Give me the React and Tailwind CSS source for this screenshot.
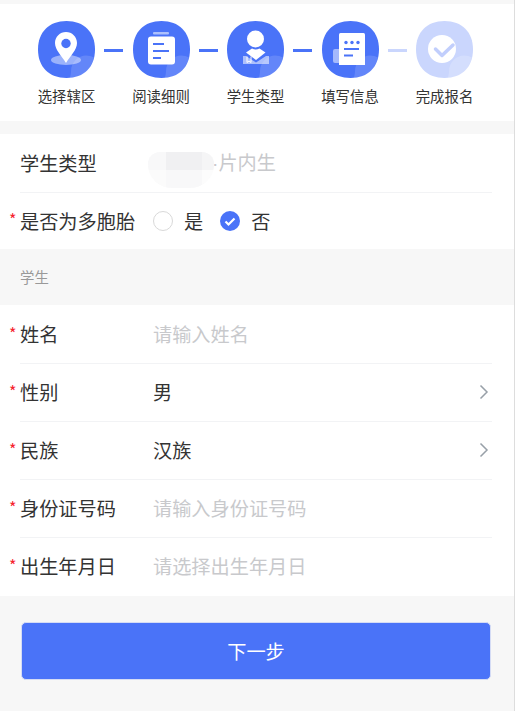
import React from "react";

const BLUE = "#4a73f8";

function Squircle({ children }) {
  return (
    <svg width="57" height="57" viewBox="0 0 57 57" className="block">
      <path d="M28.500 0C46 0 57 11 57 28.500S46 57 28.500 57 0 46 0 28.500 11 0 28.500 0Z" fill={BLUE} />
      <path d="M33 50.500C33 41 40.500 34.500 48 34.500c3 0 5.800 .8 8 2C53.500 48.500 43 57 32 57c.2-2 1-4.500 1-6.500Z" fill="#fff" fillOpacity=".14" />
      {children}
    </svg>
  );
}

function PinIcon() {
  return (
    <Squircle>
      <ellipse cx="28" cy="39" rx="15" ry="5" fill="#fff" fillOpacity=".45" />
      <path d="M28 11c-6 0-11 4.800-11 11 0 7 6.500 12.500 11 20 4.500-7.500 11-13 11-20 0-6.200-5-11-11-11Z" fill="#fff" />
      <circle cx="28" cy="22.500" r="4.700" fill={BLUE} />
    </Squircle>
  );
}

function ClipboardIcon() {
  return (
    <Squircle>
      <rect x="20" y="11" width="16" height="2.500" rx="1" fill="#fff" fillOpacity=".55" />
      <rect x="15" y="15.500" width="27" height="28" rx="3" fill="#fff" />
      <rect x="20" y="22" width="11" height="2" fill={BLUE} />
      <rect x="20" y="29" width="16" height="2" fill={BLUE} />
      <rect x="20" y="36" width="8" height="2" fill={BLUE} />
    </Squircle>
  );
}

function StudentIcon() {
  return (
    <Squircle>
      <circle cx="28.500" cy="18" r="8.500" fill="#fff" />
      <path d="M19 31.500l6-4c2.500 1.200 5 1.200 7.500 0l6 4-9.500 7.500Z" fill="#fff" />
      <path d="M16 35h3l10 6.500 10-6.500h3v8H16Z" fill="#fff" fillOpacity=".55" />
      <path d="M20 35.500v6l2-1.500 2 1.500v-6" fill="none" stroke="#fff" strokeWidth="1" />
    </Squircle>
  );
}

function FormIcon() {
  return (
    <Squircle>
      <rect x="11" y="28" width="8" height="14" rx="2" fill="#fff" fillOpacity=".5" />
      <path d="M17 13.500a1.500 1.500 0 0 1 1.500-1.500H41.500a1.500 1.500 0 0 1 1.500 1.500V44H17Z" fill="#fff" />
      <circle cx="24" cy="21.500" r="1.700" fill={BLUE} />
      <circle cx="30" cy="21.500" r="1.700" fill={BLUE} />
      <circle cx="36" cy="21.500" r="1.700" fill={BLUE} />
      <rect x="22" y="27" width="15" height="2" fill={BLUE} />
      <rect x="22" y="33.500" width="9" height="2" fill={BLUE} />
    </Squircle>
  );
}

function DoneIcon() {
  return (
    <svg width="57" height="57" viewBox="0 0 57 57" className="block">
      <path d="M28.500 0C46 0 57 11 57 28.500S46 57 28.500 57 0 46 0 28.500 11 0 28.500 0Z" fill="#cad6fd" />
      <path d="M33 50.500C33 41 40.500 34.500 48 34.500c3 0 5.800 .8 8 2C53.500 48.500 43 57 32 57c.2-2 1-4.500 1-6.500Z" fill="#fff" fillOpacity=".2" />
      <circle cx="26" cy="28" r="14" fill="#fff" />
      <path d="M19.500 28l6.500 6.500 11-10.500" fill="none" stroke="#c1cefc" strokeWidth="3.500" strokeLinecap="round" strokeLinejoin="round" />
    </svg>
  );
}

const steps = [
  { label: "选择辖区", icon: <PinIcon /> },
  { label: "阅读细则", icon: <ClipboardIcon /> },
  { label: "学生类型", icon: <StudentIcon /> },
  { label: "填写信息", icon: <FormIcon /> },
  { label: "完成报名", icon: <DoneIcon /> },
];

function Chevron() {
  return (
    <svg width="10" height="16" viewBox="0 0 10 16" className="block">
      <path d="M1.500 1.500L8 8l-6.500 6.500" fill="none" stroke="#98a0a8" strokeWidth="1.500" />
    </svg>
  );
}

function FormRow({ label, required, value, placeholder, arrow, last }) {
  return (
    <div className={last ? "relative ml-5 mr-[22px] flex h-[59px] items-center pb-px" : "relative ml-5 mr-[22px] flex h-[58px] items-center"}>
      {required && (
        <span className="absolute left-[-11px] top-[20px] text-[16px] leading-[16px] text-[#f5222d]">*</span>
      )}
      <span className="w-[133px] shrink-0 text-[#333]">{label}</span>
      <span className={value ? "flex-1 text-[#333]" : "flex-1 text-[#c8c9cc]"}>{value || placeholder}</span>
      {arrow && (
        <span className="mr-[3px]">
          <Chevron />
        </span>
      )}
      {!last && <div className="absolute inset-x-0 bottom-[-1px] h-px bg-[#f2f3f5]" />}
    </div>
  );
}

export default function App() {
  return (
    <div className="relative h-[711px] w-[515px] overflow-hidden border-r border-[#ddd] bg-[#f7f7f7] pt-1 text-[19.200px] font-['Noto_Sans_CJK_SC','Noto_Sans',sans-serif]">
      {/* Steps */}
      <div className="flex h-[117px] items-start bg-white pl-[38px] pt-[17px]">
        {steps.map((step, i) => (
          <React.Fragment key={step.label}>
            <div className="flex w-[57px] shrink-0 flex-col items-center">
              {step.icon}
              <span className="mt-[8px] whitespace-nowrap text-[14.400px] leading-[20px] text-[#333]">{step.label}</span>
            </div>
            {i < steps.length - 1 && (
              <div className="mt-[28px] flex w-[37.500px] shrink-0 justify-center">
                <div className={i === 3 ? "h-[3px] w-[19px] bg-[#cad6fd]" : "h-[3px] w-[19px] bg-[#4a73f8]"} />
              </div>
            )}
          </React.Fragment>
        ))}
      </div>

      {/* Student type */}
      <div className="mt-[13px] bg-white">
        <div className="relative ml-5 mr-[22px] flex h-[59px] items-center border-b border-[#f2f3f5]">
          <span className="w-[133px] shrink-0 text-[#333]">学生类型</span>
          <span className="pl-[59px] text-[#c8c9cc]">
            <span className="font-['Liberation_Sans',sans-serif]">·</span>片内生
          </span>
          <div className="absolute left-[128px] top-[18px] grid h-[36px] w-[66px] grid-cols-[18px_36px_12px] grid-rows-[18px_18px] overflow-hidden rounded-b-[28px] rounded-t-[14px] bg-[#fafafa]">
            <div className="bg-[#f8f8f9]" />
            <div className="bg-[#f0f0f2]" />
            <div className="bg-[#f5f5f6]" />
            <div className="bg-[#fbfbfb]" />
            <div className="bg-[#f8f8f9]" />
            <div className="bg-[#fcfcfc]" />
          </div>
        </div>
        <div className="relative ml-5 mr-[22px] flex h-[56px] items-center">
          <span className="absolute left-[-11px] top-[18px] text-[16px] leading-[16px] text-[#f5222d]">*</span>
          <span className="w-[133px] shrink-0 text-[#333]">是否为多胞胎</span>
          <span className="h-[20px] w-[20px] rounded-full border border-[#d9d9d9]" />
          <span className="ml-[11px] text-[#333]">是</span>
          <span className="ml-[17px] flex h-[20px] w-[20px] items-center justify-center rounded-full bg-[#4a73f8]">
            <svg width="14" height="14" viewBox="0 0 14 14" className="block">
              <path d="M2.500 7.500l3 3 6-6" fill="none" stroke="#fff" strokeWidth="2.200" />
            </svg>
          </span>
          <span className="ml-[11px] text-[#333]">否</span>
        </div>
      </div>

      {/* Section title */}
      <div className="flex h-[56px] items-center pl-5 text-[14.400px] text-[#999]">学生</div>

      {/* Student info */}
      <div className="bg-white">
        <FormRow required label="姓名" placeholder="请输入姓名" />
        <FormRow required label="性别" value="男" arrow />
        <FormRow required label="民族" value="汉族" arrow />
        <FormRow required label="身份证号码" placeholder="请输入身份证号码" />
        <FormRow required label="出生年月日" placeholder="请选择出生年月日" last />
      </div>

      <div className="ml-[21px] mt-[26px] w-[470px]">
        <button className="flex h-[58px] w-full items-center justify-center rounded-[5px] border border-[#d5dcf5] bg-[#4a73f8] text-white">
          下一步
        </button>
      </div>
    </div>
  );
}
